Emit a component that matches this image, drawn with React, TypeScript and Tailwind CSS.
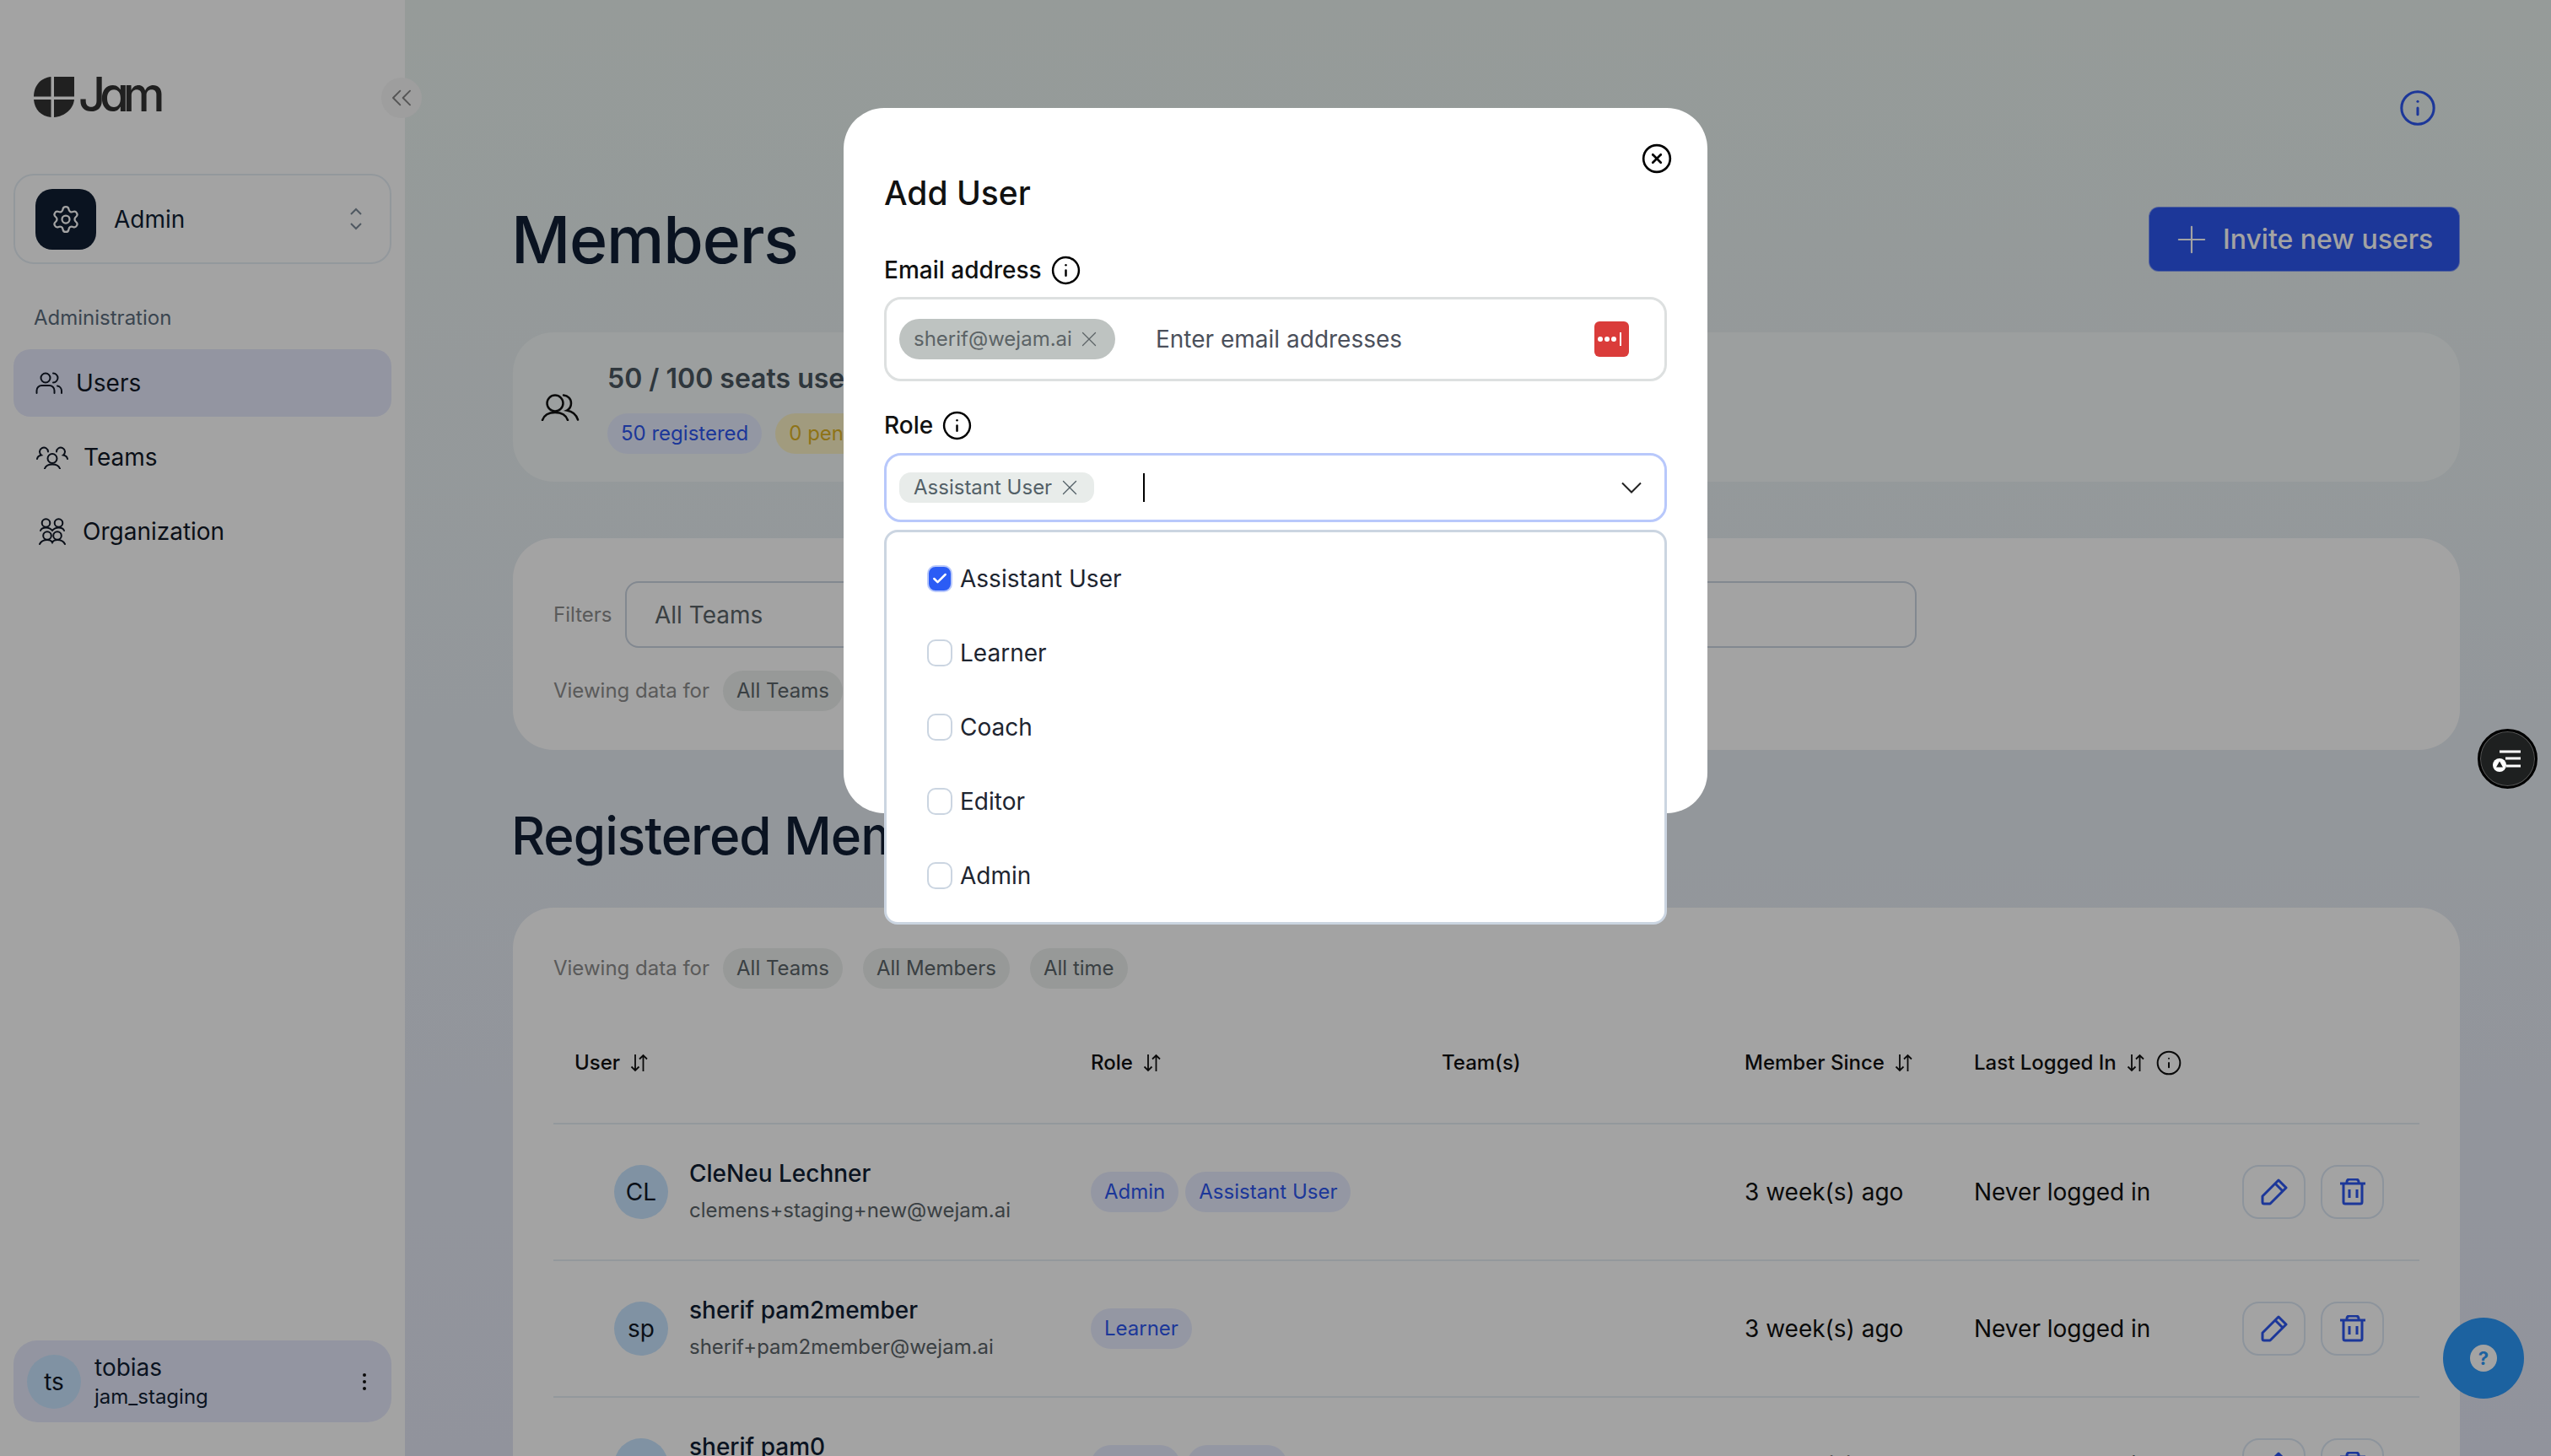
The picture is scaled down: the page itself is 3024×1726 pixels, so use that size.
import { Check, ChevronsLeft, CircleX, Info, Plus, Settings, X } from "lucide-react"

const SortIcon = () => (
  <svg width="22" height="22" viewBox="0 0 22 22" fill="none" stroke="#111" strokeWidth="1.800" className="shrink-0">
    <path d="M6 1v19M1.500 15.500 6 20l4.500-4.500" />
    <path d="M15.500 21V2M11 6.500 15.500 2 20 6.500" />
  </svg>
)

const UsersIcon = () => (
  <svg width="32" height="26" viewBox="0 0 32 26" fill="none" stroke="#111827" strokeWidth="2" strokeLinecap="round">
    <circle cx="12" cy="7" r="5.500" />
    <path d="M1.500 25v-3a6 6 0 0 1 6-6h9a6 6 0 0 1 6 6v3" />
    <path d="M21 1.500a5.500 5.500 0 0 1 0 11M26 16.500a6 6 0 0 1 5 6V25" />
  </svg>
)

const TeamsIcon = () => (
  <svg width="38" height="28" viewBox="0 0 38 28" fill="none" stroke="#111827" strokeWidth="2" strokeLinecap="round">
    <circle cx="19" cy="15.500" r="5.500" />
    <path d="M10 27.500c1-3 4-5 9-5s8 2 9 5" />
    <path d="M14 7.500a5 5 0 1 0-8 4C3.500 12 1.500 13.500 1 16" />
    <path d="M24 7.500a5 5 0 1 1 8 4c2.500.5 4.500 2 5 4.500" />
  </svg>
)

const OrgIcon = () => (
  <svg width="32" height="32" viewBox="0 0 32 32" fill="none" stroke="#111827" strokeWidth="2" strokeLinecap="round">
    <circle cx="8.500" cy="6" r="4.800" />
    <circle cx="23.500" cy="6" r="4.800" />
    <path d="M2 15c1-2.500 3.500-3.500 6.500-3.500S14 12.500 16 15c2-2.500 4.500-3.500 7.500-3.500S29 12.500 30 15" />
    <circle cx="10" cy="21" r="4.800" />
    <circle cx="22" cy="21" r="4.800" />
    <path d="M1 31c1.500-3 4.500-5 9-5 3 0 5 1 6 3 1-2 3-3 6-3 4.500 0 7.500 2 9 5" />
  </svg>
)

const SeatsIcon = () => (
  <svg width="46" height="32" viewBox="0 0 46 32" fill="none" stroke="#111" strokeWidth="2.500" strokeLinecap="round">
    <circle cx="17" cy="11" r="9.500" />
    <path d="M2 31c2-6 7-9 15-9s13 3 15 9" />
    <path d="M27 1.500c5 .5 9 4 9 9.500 0 4-2 7-5 8.500 6 1 11 5 13 11" />
  </svg>
)

const PencilIcon = () => (
  <svg width="32" height="32" viewBox="0 0 32 32" fill="none" stroke="#2d56ef" strokeWidth="3" strokeLinejoin="round">
    <path d="M2 21 21 2l9 9-19 19H4a2 2 0 0 1-2-2Z" />
    <path d="M17 6l9 9" />
  </svg>
)

const TrashIcon = () => (
  <svg width="30" height="32" viewBox="0 0 30 32" fill="none" stroke="#2d56ef" strokeWidth="3" strokeLinejoin="round">
    <path d="M0 6h30" />
    <path d="M8 6V4a3 3 0 0 1 3-3h8a3 3 0 0 1 3 3v2" />
    <path d="M4 6v22a2 2 0 0 0 2 2h18a2 2 0 0 0 2-2V6" />
    <path d="M11 13v10M20 13v10" />
  </svg>
)

const Logo = () => (
  <div className="flex h-[48px] items-center">
    <svg width="48" height="48" viewBox="0 0 48 48" fill="#333333" className="shrink-0">
      <path d="M20.500 0v23.500H0C0 10 9 1 20.500 0Z" />
      <path d="M24 0h24v23.500H24Z" />
      <path d="M0 27h20.500v21C9 47 1 39 0 27Z" />
      <path d="M24 27h24c-1 11-11 20-24 21Z" />
    </svg>
    <span className="ml-[5px] -mt-[6px] text-[56px] leading-none font-medium tracking-[-7px] text-[#333] [font-feature-settings:'cv11']">
      Jam
    </span>
  </div>
)

function Pill({ children, className }: { children: React.ReactNode; className: string }) {
  return (
    <span className={`inline-flex h-[48px] items-center rounded-full px-[16px] text-[24px] whitespace-nowrap ${className}`}>
      {children}
    </span>
  )
}

const FilterPill = ({ label }: { label: string }) => (
  <Pill className="bg-[#ecf0ee] text-[#5b6469]">{label}</Pill>
)

const RolePill = ({ label }: { label: string }) => (
  <Pill className="bg-[#e8edff] text-[#2d56ef]">{label}</Pill>
)

function Sidebar() {
  return (
    <aside className="relative flex h-full w-[480px] shrink-0 flex-col bg-white px-[16px] pt-[91px] pb-[40px]">
      <div className="pl-[24px]">
        <Logo />
      </div>
      <button className="absolute top-[92px] left-[452px] flex h-[48px] w-[48px] items-center justify-center rounded-full bg-[#f7f7f7]">
        <ChevronsLeft size={40} strokeWidth={1.15} color="#858585" />
      </button>

      <div className="mt-[67px] flex h-[107px] items-center rounded-[24px] border-2 border-[#e6eef5] pr-[32px] pl-[24px]">
        <div className="flex h-[72px] w-[72px] items-center justify-center rounded-[20px] bg-[#101e32]">
          <Settings size={36} strokeWidth={1.5} color="#fff" />
        </div>
        <span className="ml-[21px] text-[28px] text-[#111f35]">Admin</span>
        <svg width="16" height="27" viewBox="0 0 16 27" fill="none" stroke="#7d8b99" strokeWidth="2" className="ml-auto">
          <path d="M2 8l6-6 6 6M2 19l6 6 6-6" />
        </svg>
      </div>

      <p className="mt-[49px] pl-[24px] text-[24px] leading-[30px] text-[#5c6d7d]">Administration</p>

      <nav className="mt-[22px] flex flex-col gap-[8px]">
        <div className="flex h-[80px] items-center gap-[16px] rounded-[20px] bg-[#e7eafc] pl-[26px]">
          <UsersIcon />
          <span className="text-[28px] text-[#111827]">Users</span>
        </div>
        <div className="flex h-[80px] items-center gap-[18px] pl-[27px]">
          <TeamsIcon />
          <span className="text-[28px] text-[#111827]">Teams</span>
        </div>
        <div className="flex h-[80px] items-center gap-[20px] pl-[30px]">
          <OrgIcon />
          <span className="text-[28px] text-[#111827]">Organization</span>
        </div>
      </nav>

      <div className="mt-auto flex h-[97px] items-center rounded-[28px] bg-[#e7eafc] pr-[30px] pl-[16px]">
        <div className="flex h-[64px] w-[64px] items-center justify-center rounded-full bg-[#c8e5ff] text-[28px] text-[#111827]">
          ts
        </div>
        <div className="ml-[16px] flex flex-col">
          <span className="text-[28px] leading-[36px] text-[#111f35]">tobias</span>
          <span className="text-[24px] leading-[34px] text-[#111f35]">jam_staging</span>
        </div>
        <div className="ml-auto flex flex-col gap-[4px]">
          <span className="h-[4px] w-[4px] rounded-full bg-[#111]" />
          <span className="h-[4px] w-[4px] rounded-full bg-[#111]" />
          <span className="h-[4px] w-[4px] rounded-full bg-[#111]" />
        </div>
      </div>
    </aside>
  )
}

const members = [
  { initials: "CL", name: "CleNeu Lechner", email: "clemens+staging+new@wejam.ai", roles: ["Admin", "Assistant User"] },
  { initials: "sp", name: "sherif pam2member", email: "sherif+pam2member@wejam.ai", roles: ["Learner"] },
  { initials: "sp", name: "sherif pam0", email: "sherif+pam0@wejam.ai", roles: ["Coach", "Learner"] },
]

const tableCols = "grid grid-cols-[637px_416px_359px_272px_1fr]"

function MembersTable() {
  return (
    <div className="mt-[16px]">
      <div className={`${tableCols} h-[145px] items-center border-b-2 border-[#e6eef5] text-[24px] font-medium text-[#111]`}>
        <div className="flex items-center gap-[12px] pl-[25px]">
          User <SortIcon />
        </div>
        <div className="flex items-center gap-[12px]">
          Role <SortIcon />
        </div>
        <div>Team(s)</div>
        <div className="flex items-center gap-[12px]">
          Member Since <SortIcon />
        </div>
        <div className="flex items-center gap-[12px]">
          Last Logged In <SortIcon />
          <Info size={32} strokeWidth={1.5} color="#111" />
        </div>
      </div>

      {members.map((m) => (
        <div key={m.email} className={`${tableCols} h-[162px] items-center border-b-2 border-[#e6eef5]`}>
          <div className="flex items-center pl-[72px]">
            <div className="flex h-[64px] w-[64px] items-center justify-center rounded-full bg-[#c8e5ff] text-[28px] text-[#111827]">
              {m.initials}
            </div>
            <div className="ml-[25px] flex flex-col gap-[8px]">
              <span className="text-[28px] leading-[36px] font-medium text-[#111f35]">{m.name}</span>
              <span className="text-[24px] leading-[36px] text-[#5b6469]">{m.email}</span>
            </div>
          </div>
          <div className="flex gap-[8px]">
            {m.roles.map((r) => (
              <RolePill key={r} label={r} />
            ))}
          </div>
          <div />
          <div className="text-[28px] text-[#111]">3 week(s) ago</div>
          <div className="flex items-center justify-between pr-[42px]">
            <span className="text-[28px] text-[#111]">Never logged in</span>
            <div className="flex gap-[18px]">
              <button className="flex h-[64px] w-[75px] items-center justify-center rounded-[20px] border-2 border-[#dde8f5]">
                <PencilIcon />
              </button>
              <button className="flex h-[64px] w-[75px] items-center justify-center rounded-[20px] border-2 border-[#dde8f5]">
                <TrashIcon />
              </button>
            </div>
          </div>
        </div>
      ))}
    </div>
  )
}

function Main() {
  return (
    <main className="h-full flex-1 bg-gradient-to-b from-[#ebf3f0] to-[#e3e7f5] pt-[109px] pr-[108px] pl-[128px]">
      <div className="flex justify-end pr-[27px]">
        <Info size={46} strokeWidth={1.6} color="#2d56ef" className="-my-[4px]" />
      </div>

      <div className="mt-[98px] flex h-[77px] items-center justify-between">
        <h1 className="-ml-[2px] pt-[2px] text-[77px] font-medium tracking-[-1.2px] text-[#111f35]">Members</h1>
        <button className="flex h-[77px] w-[369px] items-center gap-[11px] rounded-[12px] border border-white/40 bg-[#2d56ef] pl-[24px] text-[32px] font-medium text-white">
          <Plus size={52} strokeWidth={1} />
          Invite new users
        </button>
      </div>

      <section className="mt-[72px] flex h-[177px] items-center rounded-[48px] bg-[#f4f9f9] pl-[33px]">
        <SeatsIcon />
        <div className="ml-[33px] flex flex-col gap-[22px] pt-[2px]">
          <div className="text-[32px] leading-[38px] font-semibold text-[#4a5660]">50 / 100 seats used</div>
          <div className="flex gap-[16px]">
            <Pill className="bg-[#e7edff] text-[#2d56ef]">50 registered</Pill>
            <Pill className="bg-[#fcf3c6] text-[#dfb425]">0 pending</Pill>
          </div>
        </div>
      </section>

      <section className="mt-[67px] h-[251px] rounded-[48px] bg-white px-[48px] pt-[51px]">
        <div className="flex items-center gap-[16px]">
          <span className="w-[69px] text-[24px] text-[#8d8d8d]">Filters</span>
          <div className="grid w-[1531px] grid-cols-3 gap-[16px]">
            {["All Teams", "All Members", "All time"].map((s) => (
              <div key={s} className="flex h-[79px] items-center rounded-[16px] border-2 border-[#cbd5e1] pl-[33px] text-[28px] text-[#5b6469]">
                {s}
              </div>
            ))}
          </div>
        </div>
        <div className="mt-[27px] flex items-center">
          <span className="mr-[16px] text-[24px] text-[#8d8d8d]">Viewing data for</span>
          <div className="flex gap-[24px]">
            <FilterPill label="All Teams" />
            <FilterPill label="All Members" />
            <FilterPill label="All time" />
          </div>
        </div>
      </section>

      <h2 className="mt-[66px] -ml-[2px] text-[62px] leading-[72px] font-medium tracking-[-1px] text-[#111f35]">Registered Members</h2>

      <section className="mt-[49px] rounded-t-[48px] bg-white px-[48px] pt-[48px]">
        <div className="flex items-center">
          <span className="mr-[16px] text-[24px] text-[#8d8d8d]">Viewing data for</span>
          <div className="flex gap-[24px]">
            <FilterPill label="All Teams" />
            <FilterPill label="All Members" />
            <FilterPill label="All time" />
          </div>
        </div>
        <MembersTable />
      </section>
    </main>
  )
}

const roleOptions = ["Assistant User", "Learner", "Coach", "Editor", "Admin"]

function AddUserModal() {
  return (
    <div className="absolute top-[128px] left-[1000px] h-[836px] w-[1024px] rounded-[48px] bg-white px-[48px] pt-[77px]">
      <CircleX size={38} strokeWidth={1.7} color="#000" className="absolute top-[41px] right-[41px]" />
      <h3 className="text-[39px] leading-[48px] font-medium text-[#111]">Add User</h3>

      <label className="mt-[51px] flex h-[32px] items-center gap-[10px] text-[28px] font-medium text-[#111]">
        Email address <Info size={37} strokeWidth={1.6} color="#000" />
      </label>
      <div className="mt-[16px] flex h-[100px] items-center rounded-[20px] border-[3px] border-[#dde0e0] pr-[42px] pl-[15px]">
        <span className="flex h-[48px] w-[256px] items-center gap-[5px] rounded-full bg-[#bec3c1] pl-[17px] text-[24px] text-[#5c6366]">
          sherif@wejam.ai <X size={30} strokeWidth={1} />
        </span>
        <span className="ml-[48px] text-[28px] text-[#4b505b]">Enter email addresses</span>
        <div className="ml-auto flex h-[42px] w-[41px] items-center gap-[2px] rounded-[6px] bg-[#da3c3a] pl-[4px]">
          <span className="h-[6px] w-[6px] rounded-full bg-white" />
          <span className="h-[6px] w-[6px] rounded-full bg-white" />
          <span className="h-[6px] w-[6px] rounded-full bg-white" />
          <span className="ml-[2px] h-[16px] w-[2px] bg-white" />
        </div>
      </div>

      <label className="mt-[36px] flex h-[32px] items-center gap-[10px] text-[28px] font-medium text-[#111]">
        Role <Info size={37} strokeWidth={1.6} color="#000" />
      </label>
      <div className="relative mt-[17px] flex h-[82px] items-center rounded-[20px] border-[3px] border-[#b8c8fb] pr-[27px] pl-[15px]">
        <span className="flex h-[36px] w-[231px] items-center gap-[6px] rounded-[14px] bg-[#e8ecea] pl-[17px] text-[24px] text-[#536067]">
          Assistant User <X size={30} strokeWidth={1} />
        </span>
        <span className="ml-[58px] h-[34px] w-[2px] bg-black" />
        <svg width="24" height="14" viewBox="0 0 24 14" fill="none" stroke="#222" strokeWidth="2" className="ml-auto">
          <path d="M1 1.500 12 12.500 23 1.500" />
        </svg>

        <div className="absolute top-[88px] -right-[3px] -left-[3px] flex h-[468px] flex-col rounded-[16px] border-[3px] border-[#cbd5e1] bg-white pt-[11px] pl-[48px]">
          {roleOptions.map((r, i) => (
            <div key={r} className="flex h-[88px] items-center gap-[9px]">
              {i === 0 ? (
                <span className="flex h-[32px] w-[30px] items-center justify-center rounded-[10px] border-2 border-[#b8c8fb] bg-[#2b5cf5]">
                  <Check size={20} strokeWidth={3} color="#fff" />
                </span>
              ) : (
                <span className="h-[32px] w-[30px] rounded-[10px] border-2 border-[#cbd5e1]" />
              )}
              <span className="text-[28px] text-[#1e2530]">{r}</span>
            </div>
          ))}
        </div>
      </div>
    </div>
  )
}

export default function App() {
  return (
    <div className="relative flex h-screen w-full overflow-hidden bg-white font-['Inter',sans-serif]">
      <Sidebar />
      <Main />

      {/* help bubble sits under the dimmed layer */}
      <button className="absolute top-[1562px] left-[2896px] flex h-[96px] w-[96px] items-center justify-center rounded-full bg-[#2c99fa]">
        <span className="flex h-[32px] w-[32px] items-center justify-center rounded-full bg-white text-[22px] font-bold text-[#2c99fa]">?</span>
      </button>

      <div className="absolute inset-0 bg-black/36" />

      <button className="absolute top-[864px] left-[2937px] flex h-[71px] w-[71px] items-center justify-center rounded-full border-[3px] border-black bg-[#1e2020] ring-1 ring-inset ring-[#555]">
        <svg width="38" height="30" viewBox="0 0 38 30" fill="none" stroke="#fff" strokeWidth="3">
          <path d="M9 6h25M16 14h18M17 23h17" />
          <circle cx="9" cy="22" r="8" fill="#fff" stroke="none" />
          <path d="M9 17.500l4 7H5Z" fill="#1e2020" stroke="none" />
        </svg>
      </button>

      <AddUserModal />
    </div>
  )
}
